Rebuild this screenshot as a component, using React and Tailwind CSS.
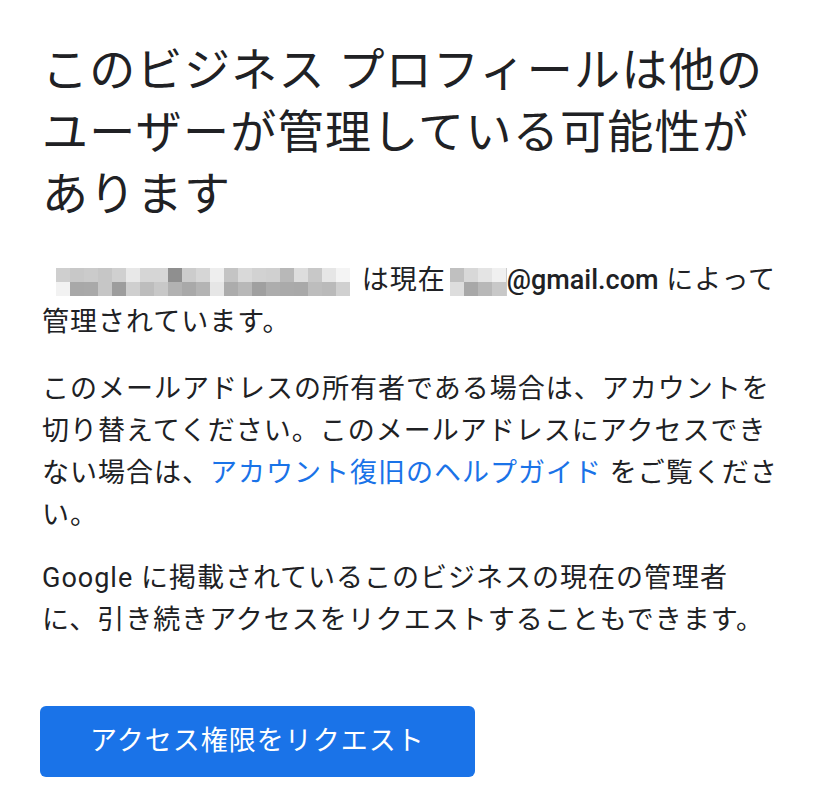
import React from "react";

const blurTop = ["#cfcfcf", "#c8c8c8", "#cbcbcb", "#c6c6c6", "#d0d0d0", "#e8e8e8", "#d6d6d6", "#d6d6d6", "#8f8f8f", "#cccccc", "#d6d6d6", "#eeeeee", "#c4c4c4", "#d9d9d9", "#d2d2d2", "#d0d0d0", "#b8b8b8", "#dddddd", "#c8c8c8", "#e6e6e6", "#f4f4f4"];
const blurBottom = ["#f2f2f2", "#a8a8a8", "#a9a9a9", "#c6c6c6", "#9d9d9d", "#cfcfcf", "#bdbdbd", "#c8c8c8", "#b2b2b2", "#a9a9a9", "#b4b4b4", "#e6e6e6", "#acacac", "#b8b8b8", "#a0a0a0", "#adadad", "#aaaaaa", "#a9a9a9", "#bdbdbd", "#bababa", "#d0d0d0"];

const mailTop = ["#c0c0c0", "#d8d8d8", "#e4e4e4", "#f0f0f0"];
const mailBottom = ["#dddddd", "#a8a8a8", "#b8b8b8", "#c8c8c8"];

// pixelated redaction block
const Mosaic = ({ top, bottom, className }) => (
  <span className={`inline-flex flex-col align-middle ${className}`}>
    <span className="flex">
      {top.map((c, i) => (
        <span key={i} className="block h-[14px] w-[14px]" style={{ backgroundColor: c }} />
      ))}
    </span>
    <span className="flex">
      {bottom.map((c, i) => (
        <span key={i} className="block h-[14px] w-[14px]" style={{ backgroundColor: c }} />
      ))}
    </span>
  </span>
);

const App = () => {
  return (
    <div
      className="min-h-screen bg-white px-[42px] pt-[39px] text-[#202124]"
      style={{ fontFamily: 'Roboto, "Noto Sans CJK JP", sans-serif' }}
    >
      <div className="w-[742px]">
        <h1 className="text-[46px] font-normal leading-[62px] tracking-[1.3px]">
          このビジネス プロフィールは他のユーザーが管理している可能性があります
        </h1>

        <p className="mt-[34px] text-[27px] leading-[42px] tracking-[1px]">
          <Mosaic top={blurTop} bottom={blurBottom} className="ml-[14px] mr-[4px]" /> は現在
          <Mosaic top={mailTop} bottom={mailBottom} className="ml-[4px] border-r border-[#cccccc]" />
          <span className="font-medium tracking-normal">@gmail.com</span> によって管理されています。
        </p>

        <p className="mt-[25px] text-[27px] leading-[42px] tracking-[1px]">
          このメールアドレスの所有者である場合は、アカウントを切り替えてください。このメールアドレスにアクセスできない場合は、
          <a href="#" className="text-[#1a73e8]">
            アカウント復旧のヘルプガイド
          </a>{" "}
          をご覧ください。
        </p>

        <p className="mt-[21px] w-[726px] text-[27px] leading-[42px] tracking-[1px]">
          Google に掲載されているこのビジネスの現在の管理者に、引き続きアクセスをリクエストすることもできます。
        </p>

        <button className="mt-[65px] ml-[-2px] flex h-[71px] w-[435px] items-center rounded-[6px] bg-[#1a73e8] pl-[50px] text-[27px] tracking-[1px] text-white">
          アクセス権限をリクエスト
        </button>
      </div>
    </div>
  );
};

export default App;
